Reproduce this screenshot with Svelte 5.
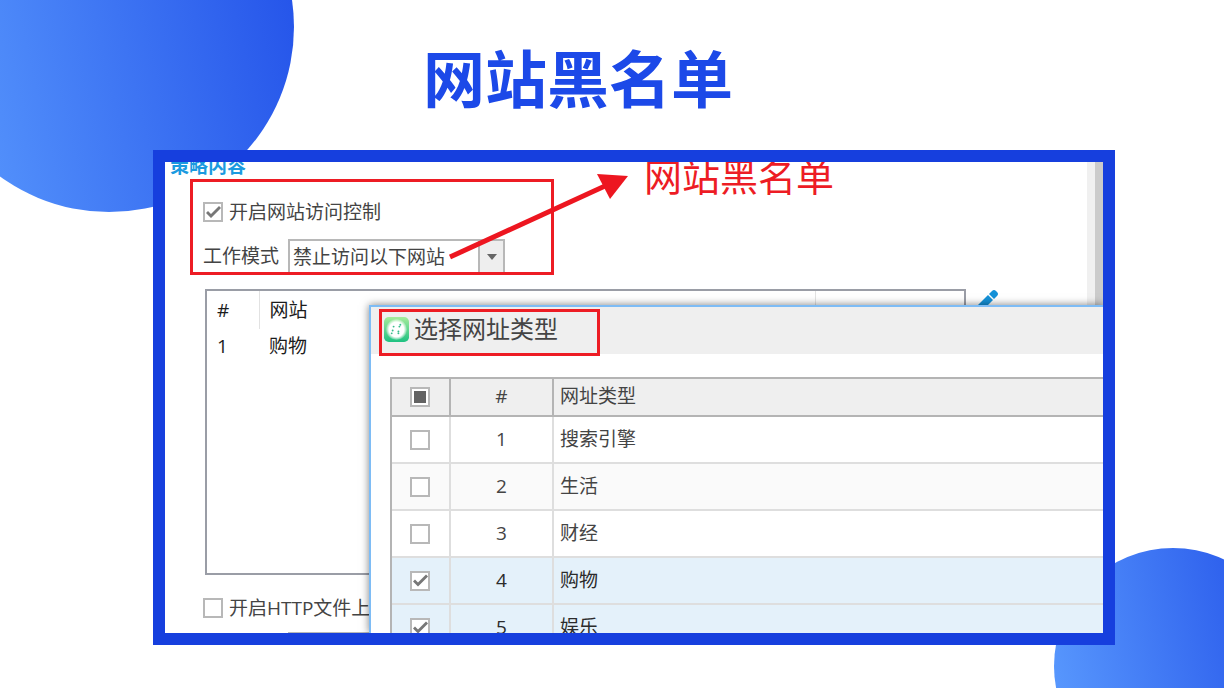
<script lang="ts">
interface SiteType {
  id: number
  name: string
  checked: boolean
}

let accessControl = $state(true)
let httpUpload = $state(false)
let mode = $state('deny')

const sites = [{ id: 1, name: '购物' }]

let siteTypes: SiteType[] = $state([
  { id: 1, name: '搜索引擎', checked: false },
  { id: 2, name: '生活', checked: false },
  { id: 3, name: '财经', checked: false },
  { id: 4, name: '购物', checked: true },
  { id: 5, name: '娱乐', checked: true },
])

const allChecked = $derived(siteTypes.every(t => t.checked))
const someChecked = $derived(!allChecked && siteTypes.some(t => t.checked))

function toggleAll() {
  const next = !allChecked
  siteTypes.forEach(t => (t.checked = next))
}
</script>

<div class="slide">
  <div class="circle circle-top"></div>
  <div class="circle circle-bottom"></div>

  <h1>网站黑名单</h1>

  <main class="frame">
    <section class="policy">
      <h2>策略内容</h2>

      <div class="mode-group">
        <label class="check-row">
          <input type="checkbox" bind:checked={accessControl} />
          开启网站访问控制
        </label>
        <div class="mode-row">
          <label for="mode">工作模式</label>
          <div class="select">
            <select id="mode" bind:value={mode}>
              <option value="deny">禁止访问以下网站</option>
              <option value="allow">允许访问以下网站</option>
            </select>
            <span class="select-arrow"></span>
          </div>
        </div>
      </div>

      <div class="list-row">
        <div class="site-list">
          <table>
            <thead>
              <tr><th class="num">#</th><th>网站</th><th class="extra"></th></tr>
            </thead>
            <tbody>
              {#each sites as site (site.id)}
                <tr><td>{site.id}</td><td>{site.name}</td><td></td></tr>
              {/each}
            </tbody>
          </table>
        </div>
        <button class="edit" aria-label="编辑">
          <svg width="24" height="24" viewBox="0 0 24 24">
            <path d="M0 24 L1 17 L12 6 L17 11 L6 22 Z" />
            <path d="M13 5 L16 2 Q18 0 20 2 L21 3 Q23 5 21 7 L18 10 Z" />
          </svg>
        </button>
      </div>

      <label class="check-row upload">
        <input type="checkbox" bind:checked={httpUpload} />
        开启HTTP文件上传控制
      </label>
      <input class="upload-filter" type="text" aria-label="文件类型" />
    </section>
    <div class="scrollbar"></div>

    <div class="note">网站黑名单</div>
    <svg class="arrow" width="480" height="110" viewBox="0 0 480 110">
      <path d="M285 95 L440 24" stroke="#ed1620" stroke-width="5" />
      <path d="M432 12 L463 14 L445 37 Z" fill="#ed1620" />
    </svg>

    <div class="dialog" role="dialog" aria-labelledby="dialog-title">
      <div class="dialog-bar">
        <div class="dialog-title">
          <svg width="25" height="25" viewBox="0 0 26 26">
            <defs>
              <linearGradient id="logo-bg" x1="0" y1="0" x2="0" y2="1">
                <stop offset="0" stop-color="#a5ec9b" />
                <stop offset="1" stop-color="#1fc182" />
              </linearGradient>
              <radialGradient id="logo-glow">
                <stop offset="0.7" stop-color="#fff" />
                <stop offset="1" stop-color="#fff" stop-opacity="0.1" />
              </radialGradient>
            </defs>
            <rect width="26" height="26" rx="5" fill="url(#logo-bg)" />
            <circle cx="13" cy="13" r="11" fill="url(#logo-glow)" />
            <g fill="#35bd8c">
              <circle cx="10" cy="10" r="1" />
              <circle cx="17" cy="8" r="1" />
              <circle cx="16" cy="10" r="1" />
              <circle cx="9" cy="14" r="1" />
              <circle cx="15" cy="15" r="1" />
              <circle cx="8" cy="17" r="1" />
              <circle cx="15" cy="17" r="1" />
            </g>
          </svg>
          <h3 id="dialog-title">选择网址类型</h3>
        </div>
      </div>

      <table class="types">
        <thead>
          <tr>
            <th class="pick">
              <input
                type="checkbox"
                aria-label="全选"
                checked={allChecked}
                indeterminate={someChecked}
                onchange={toggleAll}
              />
            </th>
            <th class="index">#</th>
            <th class="name">网址类型</th>
          </tr>
        </thead>
        <tbody>
          {#each siteTypes as type (type.id)}
            <tr class:selected={type.checked}>
              <td class="pick">
                <input type="checkbox" aria-label={type.name} bind:checked={type.checked} />
              </td>
              <td class="index">{type.id}</td>
              <td class="name">{type.name}</td>
            </tr>
          {/each}
        </tbody>
      </table>
    </div>
  </main>
</div>

<style>
  :global(body) {
    margin: 0;
  }

  .slide {
    position: relative;
    display: flex;
    flex-direction: column;
    box-sizing: border-box;
    height: 100vh;
    padding: 39px 109px 43px 153px;
    overflow: hidden;
    background: #fff;
    color: #444;
    font: 19px/24px 'Open Sans', 'Noto Sans CJK SC', sans-serif;
  }

  .circle {
    position: absolute;
    border-radius: 50%;
    background: linear-gradient(77deg, #5c9dff, #214fe8);
  }

  .circle-top {
    top: -158px;
    left: -76px;
    width: 370px;
    height: 370px;
  }

  .circle-bottom {
    right: -68px;
    bottom: -96px;
    width: 238px;
    height: 236px;
  }

  h1 {
    position: relative;
    margin: 0 0 31px 270px;
    color: #1c49e8;
    font-size: 62px;
    font-weight: 700;
    line-height: 80px;
    white-space: nowrap;
  }

  .frame {
    position: relative;
    display: flex;
    flex: 1;
    min-height: 0;
    overflow: hidden;
    border: 12px solid #163fde;
    background: #fff;
  }

  .policy {
    flex: 1;
    min-width: 0;
  }

  h2 {
    margin: -8px 0 1px 5px;
    color: #1b9ae0;
    font-size: 19px;
    font-weight: 700;
  }

  input[type='checkbox'] {
    position: relative;
    flex: none;
    box-sizing: border-box;
    width: 20px;
    height: 20px;
    margin: 0;
    appearance: none;
    border: 2px solid #b8b8b8;
    background: #fff;
  }

  input[type='checkbox']:checked::after {
    content: '';
    position: absolute;
    inset: 0;
    background: #777;
    clip-path: polygon(1px 9px, 3px 7px, 6px 10px, 14px 2px, 16px 4px, 6px 14px);
  }

  input[type='checkbox']:indeterminate::after {
    content: '';
    position: absolute;
    inset: 2px;
    background: #636363;
  }

  .mode-group {
    display: flex;
    flex-direction: column;
    gap: 15px;
    box-sizing: border-box;
    width: 364px;
    margin-left: 25px;
    padding: 18px 10px 0;
    border: 3px solid #ed1c24;
  }

  .check-row {
    display: flex;
    align-items: center;
    gap: 6px;
    white-space: nowrap;
  }

  .mode-row {
    display: flex;
    align-items: center;
    gap: 9px;
  }

  .select {
    position: relative;
    width: 217px;
    height: 33px;
  }

  select {
    box-sizing: border-box;
    width: 100%;
    height: 100%;
    padding: 0 30px 0 3px;
    appearance: none;
    border: 2px solid #b8b8b8;
    border-bottom: 0;
    border-radius: 0;
    background: #fff;
    color: inherit;
    font: inherit;
  }

  .select-arrow {
    position: absolute;
    top: 2px;
    right: 2px;
    bottom: 0;
    display: flex;
    align-items: center;
    justify-content: center;
    width: 23px;
    border-left: 2px solid #b8b8b8;
    background: #eee;
    pointer-events: none;
  }

  .select-arrow::after {
    content: '';
    border: 5px solid transparent;
    border-top: 6px solid #666;
    border-bottom: 0;
  }

  .list-row {
    display: flex;
    gap: 10px;
    margin: 14px 0 21px 40px;
  }

  .site-list {
    flex: 1;
    box-sizing: border-box;
    height: 286px;
    border: 2px solid #9a9da6;
    color: #1c1c1c;
  }

  .site-list table {
    width: 100%;
    border-collapse: collapse;
    table-layout: fixed;
  }

  .site-list th,
  .site-list td {
    box-sizing: border-box;
    height: 34px;
    padding: 0 0 1px 10px;
    font-weight: 400;
    text-align: left;
  }

  .site-list th {
    height: 38px;
    border-right: 1px solid #e2e2e2;
  }

  .site-list .num {
    width: 52px;
  }

  .site-list .extra {
    width: 149px;
    border-right: 0;
  }

  .edit {
    width: 111px;
    height: 24px;
    padding: 0;
    border: 0;
    background: none;
    text-align: left;
  }

  .edit svg {
    display: block;
    fill: #1491d8;
  }

  .upload {
    margin-left: 38px;
  }

  .upload-filter {
    display: block;
    width: 217px;
    height: 33px;
    box-sizing: border-box;
    margin: 12px 0 0 123px;
    border: 2px solid #b8b8b8;
  }

  .scrollbar {
    box-sizing: border-box;
    width: 16px;
    border-left: 8px solid #f0f0f0;
    background: #cbcbcb;
  }

  .note {
    position: absolute;
    top: -5px;
    left: 479px;
    color: #ed1c24;
    font-size: 38px;
    line-height: 38px;
    white-space: nowrap;
  }

  .arrow {
    position: absolute;
    top: 0;
    left: 0;
    pointer-events: none;
  }

  .dialog {
    position: absolute;
    top: 143px;
    right: 0;
    bottom: 0;
    left: 204px;
    border-top: 2px solid #7ebcf5;
    border-left: 2px solid #7ebcf5;
    background: #fff;
    box-shadow: 0 0 8px rgba(0, 0, 0, 0.5);
  }

  .dialog-bar {
    height: 47px;
    padding: 2px 0 0 8px;
    box-sizing: border-box;
    background: #efefef;
  }

  .dialog-title {
    display: flex;
    align-items: center;
    gap: 5px;
    box-sizing: border-box;
    width: 221px;
    height: 47px;
    padding: 0 0 7px 2px;
    border: 3px solid #ed1c24;
  }

  h3 {
    margin: 0;
    font-size: 24px;
    font-weight: 400;
    line-height: 30px;
    white-space: nowrap;
  }

  .types {
    width: calc(100% - 19px);
    margin: 23px 0 0 19px;
    border-spacing: 0;
    border-top: 2px solid #b4b4b4;
    border-left: 2px solid #b4b4b4;
    table-layout: fixed;
  }

  .types th,
  .types td {
    box-sizing: border-box;
    height: 47px;
    padding: 0 0 2px;
    border-right: 2px solid #dedede;
    border-bottom: 2px solid #dedede;
    font-weight: 400;
    text-align: center;
  }

  .types th {
    height: 38px;
    border-color: #b4b4b4;
    background: #efefef;
  }

  .types .pick {
    width: 59px;
    padding: 0 1px 0 0;
  }

  .types .pick input {
    display: block;
    margin: 0 auto;
  }

  .types .index {
    width: 103px;
  }

  .types .name {
    padding-left: 6px;
    border-right: 0;
    text-align: left;
  }

  .types tbody tr:nth-child(even) {
    background: #fafafa;
  }

  .types tbody tr.selected {
    background: #e4f1fa;
    color: #2b2b2b;
  }
</style>
